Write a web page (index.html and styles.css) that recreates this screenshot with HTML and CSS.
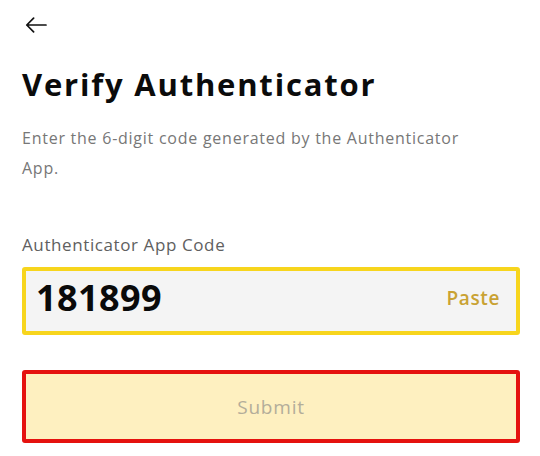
FILE: index.html
```html
<!DOCTYPE html>
<html lang="en">
<head>
<meta charset="utf-8">
<title>Verify Authenticator</title>
<link rel="stylesheet" href="styles.css">
</head>
<body>
<div class="page">
  <div class="topbar">
    <svg class="back" width="22" height="16" viewBox="0 0 22 16" aria-label="Back">
      <path d="M21 8H1.8M8.6 1.2L1.8 8l6.8 6.8" fill="none" stroke="#111" stroke-width="1.7" stroke-linecap="round" stroke-linejoin="round"/>
    </svg>
  </div>
  <h1 class="title">Verify Authenticator</h1>
  <p class="desc">Enter the 6-digit code generated by the Authenticator App.</p>
  <label class="label">Authenticator App Code</label>
  <div class="field">
    <span class="code">181899</span>
    <span class="paste">Paste</span>
  </div>
  <div class="submit">Submit</div>
</div>
</body>
</html>
```
FILE: styles.css
```css
html, body {
  margin: 0;
  padding: 0;
  background: #ffffff;
}
.page {
  padding: 0 20px 0 22px;
  font-family: "Open Sans", "Liberation Sans", sans-serif;
}
.topbar {
  height: 50px;
  padding-top: 17px;
  box-sizing: border-box;
}
.back {
  display: block;
  margin-left: 3px;
}
.title {
  margin: 14px 0 0;
  font-size: 31px;
  line-height: 40px;
  font-weight: 700;
  color: #0b0b0b;
  letter-spacing: 1.8px;
}
.desc {
  margin: 19px 0 0;
  max-width: 455px;
  font-size: 16px;
  line-height: 30px;
  color: #777777;
  letter-spacing: 0.75px;
}
.label {
  display: block;
  margin-top: 50px;
  font-size: 17px;
  line-height: 24px;
  color: #606060;
  letter-spacing: 0.6px;
}
.field {
  margin-top: 10px;
  height: 68px;
  box-sizing: border-box;
  border: 4px solid #f7d51d;
  border-radius: 3px;
  background: #f4f4f4;
  display: flex;
  align-items: center;
  justify-content: space-between;
  padding: 0 16px 6px 10px;
}
.code {
  font-size: 36px;
  line-height: 44px;
  font-weight: 700;
  color: #0a0a0a;
  letter-spacing: 0.4px;
}
.paste {
  font-size: 19px;
  font-weight: 600;
  color: #c9a233;
  letter-spacing: 0.6px;
}
.submit {
  margin-top: 35px;
  height: 73px;
  box-sizing: border-box;
  border: 4px solid #e5120f;
  border-radius: 3px;
  background: #fef0c0;
  display: flex;
  align-items: center;
  justify-content: center;
  font-size: 19px;
  font-weight: 500;
  color: #b3ad9a;
  letter-spacing: 0.8px;
}
```
